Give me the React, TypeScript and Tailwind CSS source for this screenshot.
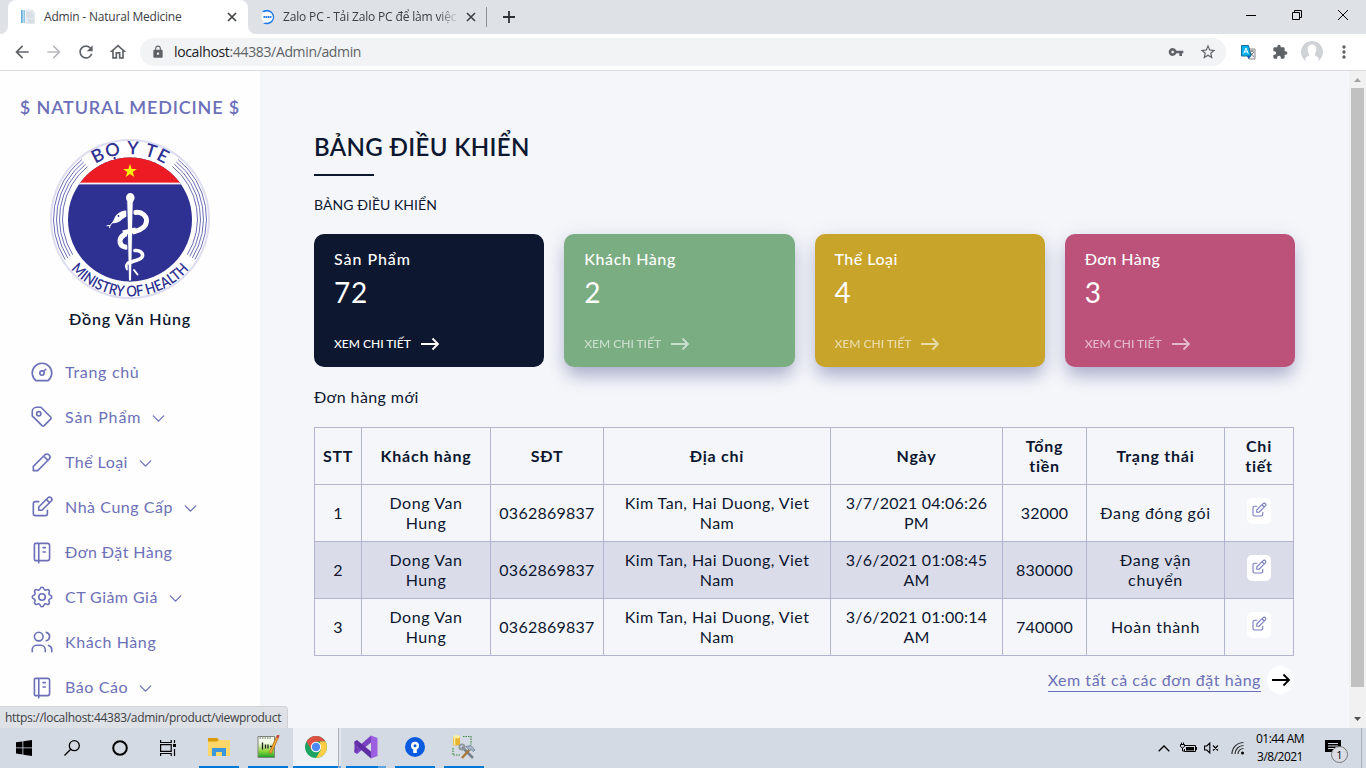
import React from "react";
import { MdArrowBack, MdArrowForward, MdRefresh, MdOutlineHome, MdLock, MdVpnKey, MdStarBorder, MdExtension, MdMoreVert } from "react-icons/md";

type IconProps = { className?: string; children: React.ReactNode };

function Line({ className = "", children }: IconProps) {
  return (
    <svg viewBox="0 0 24 24" fill="none" stroke="currentColor" strokeWidth="1.5" strokeLinecap="round" strokeLinejoin="round" className={className}>
      {children}
    </svg>
  );
}

const dashboard = (
  <>
    <circle cx="12" cy="13" r="2" />
    <path d="M13.45 11.55L15.5 9.5M6.4 20a9 9 0 1 1 11.2 0z" />
  </>
);
const tag = (
  <>
    <path d="M11 3L20 12a1.5 1.5 0 0 1 0 2L14 20a1.5 1.5 0 0 1-2 0L3 11v-4a4 4 0 0 1 4-4h4" />
    <circle cx="9" cy="9" r="2" />
  </>
);
const pencil = <path d="M4 20h4l10.5-10.5a1.5 1.5 0 0 0-4-4l-10.5 10.5v4M13.5 6.5l4 4" />;
const edit = (
  <path d="M9 7h-3a2 2 0 0 0-2 2v9a2 2 0 0 0 2 2h9a2 2 0 0 0 2-2v-3M9 15h3l8.5-8.5a1.5 1.5 0 0 0-3-3l-8.5 8.5v3M16 5l3 3" />
);
const notebook = (
  <path d="M6 4h11a2 2 0 0 1 2 2v12a2 2 0 0 1-2 2h-11a1 1 0 0 1-1-1v-14a1 1 0 0 1 1-1m3 0v18M13 8h2M13 12h2" />
);
const settings = (
  <>
    <path d="M10.325 4.317c.426-1.756 2.924-1.756 3.35 0a1.724 1.724 0 0 0 2.573 1.066c1.543-.94 3.31.826 2.37 2.37a1.724 1.724 0 0 0 1.065 2.572c1.756.426 1.756 2.924 0 3.35a1.724 1.724 0 0 0-1.066 2.573c.94 1.543-.826 3.31-2.37 2.37a1.724 1.724 0 0 0-2.572 1.065c-.426 1.756-2.924 1.756-3.35 0a1.724 1.724 0 0 0-2.573-1.066c-1.543.94-3.31-.826-2.37-2.37a1.724 1.724 0 0 0-1.065-2.572c-1.756-.426-1.756-2.924 0-3.35a1.724 1.724 0 0 0 1.066-2.573c-.94-1.543.826-3.31 2.37-2.37.996.608 2.296.07 2.572-1.065z" />
    <circle cx="12" cy="12" r="3" />
  </>
);
const users = (
  <>
    <circle cx="9" cy="7" r="4" />
    <path d="M3 21v-2a4 4 0 0 1 4-4h4a4 4 0 0 1 4 4v2M16 3.13a4 4 0 0 1 0 7.75M21 21v-2a4 4 0 0 0-3-3.85" />
  </>
);

const menu = [
  { icon: dashboard, label: "Trang chủ", arrow: false, track: "tracking-[0.7px]" },
  { icon: tag, label: "Sản Phẩm", arrow: true, track: "tracking-[0.9px]" },
  { icon: pencil, label: "Thể Loại", arrow: true, track: "tracking-[0.45px]" },
  { icon: edit, label: "Nhà Cung Cấp", arrow: true, track: "tracking-[0.55px]" },
  { icon: notebook, label: "Đơn Đặt Hàng", arrow: false, track: "tracking-[0.45px]" },
  { icon: settings, label: "CT Giảm Giá", arrow: true, track: "tracking-[0.45px]" },
  { icon: users, label: "Khách Hàng", arrow: false, track: "tracking-[0.6px]" },
  { icon: notebook, label: "Báo Cáo", arrow: true, track: "tracking-[0.6px]" },
];

function arc(r: number, side: 1 | -1) {
  const a1 = (51 * Math.PI) / 180;
  const a2 = (32 * Math.PI) / 180;
  const x = (a: number) => 80 + side * r * Math.cos(a);
  return `M${x(a1)} ${80 - r * Math.sin(a1)}A${r} ${r} 0 0 ${side === 1 ? 1 : 0} ${x(a2)} ${80 + r * Math.sin(a2)}`;
}

function Emblem() {
  return (
    <svg viewBox="0 0 160 160" className="h-40 w-40 overflow-visible">
      <defs>
        <clipPath id="disc"><circle cx="80" cy="80.5" r="62" /></clipPath>
        <path id="top" d="M15 80A65 65 0 0 1 145 80" />
        <path id="bottom" d="M2.500 80A77.500 77.500 0 0 0 157.500 80" />
      </defs>
      <circle cx="80" cy="80" r="79" fill="#fff" stroke="#dedcf0" strokeWidth="2" />
      <g fill="none" stroke="#5a5dab">
        {[67.5, 70.5, 73.5, 76.5].map((r) => (
          <React.Fragment key={r}>
            <path d={arc(r, 1)} strokeWidth="0.9" />
            <path d={arc(r, -1)} strokeWidth="0.9" />
          </React.Fragment>
        ))}
      </g>
      <g clipPath="url(#disc)">
        <rect width="160" height="160" fill="#2e3192" />
        <rect width="160" height="44" fill="#ed1c24" />
        <rect y="43.6" width="160" height="1.8" fill="#f6eef4" />
      </g>
      <path d="M80 25l1.700 5h5.200l-4.200 3.100 1.600 5-4.300-3.100-4.300 3.100 1.600-5-4.200-3.100h5.200z" fill="#fff200" />
      <g fill="none" stroke="#fff" strokeLinecap="round">
        <path d="M85.500 73.500c7-1 11.500 4 11 9-.5 6-6 8.500-12 10-8 1.500-14 3.500-14.500 9-.3 4 2 6 6 6.700" strokeWidth="5" />
        <path d="M85 111.500c5-.5 8 2.500 7.500 5.500-.7 4-7 4-11 6-4 1.500-6 3-4 6.500" strokeWidth="3.600" />
        <path d="M84 131l3.500 4.500" strokeWidth="2" />
        <path d="M63 83l-3 3.500M60 86.500l-3 .3M60 86.500l-.4 2.200" strokeWidth="1" />
      </g>
      <path d="M76.500 71.500c-5-.2-9.500 3-11.500 6.500l-3 6.300c4 .3 8-1.500 10.500-4.300l4-2.500z" fill="#fff" />
      <path d="M76.800 62h6.400L81.500 142h-3z" fill="#fff" stroke="#2e3192" strokeWidth="0.900" />
      <ellipse cx="80.300" cy="58.800" rx="4.300" ry="4.800" fill="#fff" />
      <path d="M73 94c5-1.500 9-1.800 13-3" fill="none" stroke="#fff" strokeWidth="5" />
      <path d="M77 124.500c2.500-1 4.500-1.500 7-2.300" fill="none" stroke="#fff" strokeWidth="3.400" />
      <circle cx="68.500" cy="77" r="0.900" fill="#2e3192" />
      <g fill="#2e3192" className="font-['Lato',sans-serif]" textAnchor="middle">
        <text className="text-[18px] font-semibold"><textPath href="#top" startOffset="50%" textLength="73">BỌ Y TE</textPath></text>
        <text className="text-[15px] font-semibold"><textPath href="#bottom" startOffset="50%" textLength="134" lengthAdjust="spacingAndGlyphs">MINISTRY OF HEALTH</textPath></text>
      </g>
    </svg>
  );
}

function Sidebar() {
  return (
    <aside className="flex w-[260px] shrink-0 flex-col items-center bg-[#fefefe]">
      <div className="mt-6 h-6 text-[18px] leading-6 font-semibold tracking-[0.85px] whitespace-nowrap text-[#6c70b8]">$ NATURAL MEDICINE $</div>
      <div className="mt-5"><Emblem /></div>
      <div className="mt-2 h-6 text-base leading-6 font-semibold tracking-[0.8px] text-[#0d1730]">Đồng Văn Hùng</div>
      <nav className="mt-[18px] w-full text-[#6c70b8]">
        {menu.map((m) => (
          <a key={m.label} className="flex h-[45px] items-center pl-[29px]">
            <Line className="h-[26px] w-[26px]">{m.icon}</Line>
            <span className={`ml-2.5 text-base ${m.track}`}>{m.label}</span>
            {m.arrow && (
              <Line className="mt-1 ml-[7px] h-[21px] w-[21px]"><path d="M6 9l6 6 6-6" /></Line>
            )}
          </a>
        ))}
      </nav>
    </aside>
  );
}

function Arrow({ className = "" }: { className?: string }) {
  return (
    <svg viewBox="0 0 20 14" fill="none" stroke="currentColor" strokeWidth="1.800" className={className}>
      <path d="M1 7h17M12.500 1.500L18 7l-5.500 5.500" />
    </svg>
  );
}

const cards = [
  { title: "Sản Phẩm", value: "72", look: "bg-[#0d1730]", fade: "", track: "tracking-[0.95px]" },
  { title: "Khách Hàng", value: "2", look: "bg-[#7aad81] shadow-[0_2px_20px_0_rgba(100,108,150,0.14),0_11px_17px_-3px_rgba(95,103,158,0.46)]", fade: "opacity-60", track: "tracking-[0.6px]" },
  { title: "Thể Loại", value: "4", look: "bg-[#c9a42a] shadow-[0_2px_20px_0_rgba(100,108,150,0.14),0_11px_17px_-3px_rgba(95,103,158,0.46)]", fade: "opacity-60", track: "tracking-[0.5px]" },
  { title: "Đơn Hàng", value: "3", look: "bg-[#bc5279] shadow-[0_2px_20px_0_rgba(100,108,150,0.14),0_11px_17px_-3px_rgba(95,103,158,0.46)]", fade: "opacity-60", track: "tracking-[0.4px]" },
];

const heads = ["STT", "Khách hàng", "SĐT", "Địa chỉ", "Ngày", "Tổng tiền", "Trạng thái", "Chi tiết"];
const widths = ["w-12", "w-[129px]", "w-[113px]", "w-[227px]", "w-[172px]", "w-[84px]", "w-[138px]", "w-[69px]"];
const rows = [
  ["1", "Dong Van Hung", "0362869837", "Kim Tan, Hai Duong, Viet Nam", "3/7/2021 04:06:26 PM", "32000", "Đang đóng gói"],
  ["2", "Dong Van Hung", "0362869837", "Kim Tan, Hai Duong, Viet Nam", "3/6/2021 01:08:45 AM", "830000", "Đang vận chuyển"],
  ["3", "Dong Van Hung", "0362869837", "Kim Tan, Hai Duong, Viet Nam", "3/6/2021 01:00:14 AM", "740000", "Hoàn thành"],
];
const pads = ["", "px-4", "", "px-4", "px-3", "px-2", "px-2", "px-4"];
const tracks = ["tracking-normal", "tracking-[0.6px]", "tracking-[0.25px]", "tracking-[0.42px]", "tracking-[0.2px]", "tracking-[0.2px]", "tracking-[0.65px]"];

function OrderTable() {
  return (
    <div className="w-[980px] border-t border-[#b1b5d0] text-base leading-5 text-[#0d1730]">
      <div className="flex font-bold tracking-[0.75px]">
        {heads.map((h, i) => (
          <div key={h} className={`${widths[i]} ${pads[i]} flex h-[57px] shrink-0 items-center justify-center border-r border-b border-[#b1b5d0] text-center ${i === 0 ? "border-l" : ""}`}>{h}</div>
        ))}
      </div>
      {rows.map((r, n) => (
        <div key={r[0]} className={`flex ${n === 1 ? "bg-[#dadce9]" : ""}`}>
          {r.map((c, i) => (
            <div key={i} className={`${widths[i]} ${pads[i]} ${tracks[i]} flex h-[57px] shrink-0 items-center justify-center border-r border-b border-[#b1b5d0] text-center ${i === 0 ? "border-l" : ""}`}>{c}</div>
          ))}
          <div className="flex h-[57px] w-[69px] shrink-0 justify-center border-r border-b border-[#b1b5d0] pt-[13px]">
            <span className="flex h-[26px] w-6 items-center justify-center rounded-[5px] bg-white pb-0.5 text-[#7a7ebf]">
              <Line className="h-[18px] w-[18px]">{edit}</Line>
            </span>
          </div>
        </div>
      ))}
    </div>
  );
}

function Main() {
  return (
    <main className="flex flex-1 flex-col bg-[#f4f6fa] pl-[54px] text-[#0d1730]">
      <h1 className="mt-[58px] text-2xl leading-[36px] font-semibold tracking-[0.35px]">BẢNG ĐIỀU KHIỂN</h1>
      <div className="mt-[9px] h-0.5 w-[60px] bg-[#0d1730]" />
      <p className="mt-[18px] text-sm leading-[22px] tracking-[0.05px]">BẢNG ĐIỀU KHIỂN</p>
      <div className="mt-[18px] grid w-[981px] grid-cols-4 gap-5">
        {cards.map((c) => (
          <section key={c.title} className={`flex h-[133px] flex-col rounded-[10px] px-5 text-white ${c.look}`}>
            <div className={`mt-[13px] text-base leading-6 font-medium ${c.track}`}>{c.title}</div>
            <div className="mt-1 text-[28px] leading-[34px] tracking-[0.8px]">{c.value}</div>
            <div className={`mt-6 flex items-center text-xs leading-5 font-medium ${c.fade}`}>
              <span className="pt-px">XEM CHI TIẾT</span>
              <Arrow className="ml-[9px] h-3.5 w-5" />
            </div>
          </section>
        ))}
      </div>
      <p className="mt-[18px] mb-[18px] text-base leading-6 tracking-[0.4px]">Đơn hàng mới</p>
      <OrderTable />
      <a className="mt-2.5 flex w-[980px] items-center justify-end">
        <span className="border-b border-[#6c70b8] text-base leading-[22px] tracking-[0.55px] text-[#6c70b8]">Xem tất cả các đơn đặt hàng</span>
        <span className="ml-1.5 flex h-7 w-[27px] items-center justify-center rounded-full bg-white text-black"><Arrow className="h-3.5 w-5" /></span>
      </a>
    </main>
  );
}

function Close() {
  return <svg viewBox="0 0 10 10" className="h-2.5 w-2.5 shrink-0" stroke="#3c4043" strokeWidth="1.600"><path d="M1 1l8 8M9 1L1 9" /></svg>;
}

function Browser() {
  return (
    <header className="font-['Open_Sans','Noto_Sans',sans-serif]">
      <div className="flex h-[34px] items-center bg-[#dee1e6] text-xs text-[#3c4043]">
        <div className="h-full w-2 bg-white"><div className="h-full rounded-br-lg bg-[#dee1e6]" /></div>
        <div className="flex h-full w-60 items-center rounded-t-lg bg-white pl-3">
          <svg viewBox="0 0 16 16" className="h-4 w-4"><path d="M1 1h4v13H1z" fill="#65add8" /><path d="M2.500 1h2v13h-2z" fill="#b6dcef" /><path d="M5.500.5h7l2.500 3v11.500H7l-1.500-2z" fill="#e3e9ee" /><path d="M6.500 4h5M6.500 6h7M6.500 8h7M8 11h6M8 13h6" stroke="#c5ced5" strokeWidth=".8" /></svg>
          <span className="ml-2 w-[183px] tracking-[-0.2px] whitespace-nowrap">Admin - Natural Medicine</span>
          <Close />
        </div>
        <div className="h-full w-2 bg-white"><div className="h-full rounded-bl-lg bg-[#dee1e6]" /></div>
        <svg viewBox="0 0 16 16" className="ml-1 h-4 w-4"><circle cx="7.500" cy="8" r="6" fill="#fff" /><path d="M2 2.600A7.300 7.300 0 1 1 3 14.200l3.500-.6A5.600 5.600 0 1 0 4.300 3.300z" fill="#2279f0" /><path d="M3.500 8h8" stroke="#2279f0" strokeWidth="2" strokeDasharray="1.600 .5" /></svg>
        <span className="ml-[7px] w-[176px] mask-r-from-88% tracking-[-0.16px] whitespace-nowrap">Zalo PC - Tải Zalo PC để làm việc</span>
        <span className="ml-[7px] flex"><Close /></span>
        <div className="ml-2.5 h-5 w-px bg-[#8b8f94]" />
        <svg viewBox="0 0 12 12" className="ml-4 h-3 w-3" stroke="#2f3235" strokeWidth="1.800"><path d="M6 0v12M0 6h12" /></svg>
        <div className="mr-[18px] mb-[5px] ml-auto flex items-center gap-9">
          <svg viewBox="0 0 10 10" className="h-2.5 w-2.5" stroke="#000"><path d="M0 5.500h10" /></svg>
          <svg viewBox="0 0 10 10" className="h-2.5 w-2.5" stroke="#000" fill="none"><path d="M.5 2.500h7v7h-7zM2.500 2.500v-2h7v7h-2" /></svg>
          <svg viewBox="0 0 10 10" className="h-2.5 w-2.5" stroke="#000"><path d="M0 0l10 10M10 0L0 10" /></svg>
        </div>
      </div>
      <div className="flex h-[37px] items-center border-b border-[#d9dbdf] bg-white text-[#5f6368]">
        <MdArrowBack className="ml-3 h-5 w-5" />
        <MdArrowForward className="ml-3 h-5 w-5 text-[#b8babd]" />
        <MdRefresh className="ml-3 h-5 w-5" />
        <MdOutlineHome className="ml-3 h-5 w-5" />
        <div className="ml-3 flex h-7 w-[1086px] items-center rounded-full bg-[#f1f3f4]">
          <MdLock className="ml-[11px] h-3.5 w-3.5" />
          <span className="ml-[9px] text-sm tracking-[-0.35px]"><span className="text-[#202124]">localhost</span>:44383/Admin/admin</span>
          <MdVpnKey className="ml-auto h-4 w-4" />
          <MdStarBorder className="mr-[9px] ml-[15px] h-[18px] w-[18px]" />
        </div>
        <svg viewBox="0 0 15 15" className="ml-[15px] h-[15px] w-[15px]"><path d="M6 4h8v10H8z" fill="#eef0f1" stroke="#8c8c8c" /><path d="M9 6h4M11 5v2M9 11l4-4M9 7l4 5" stroke="#6a6a6a" strokeWidth=".8" /><path d="M.5.500h7L10 11H.500z" fill="#06b1f0" stroke="#156f98" /><path d="M6 11h4l-2.500 3z" fill="#1254c0" /><path d="M2.800 8.500L5 3l2.200 5.500M3.500 6.800h3" stroke="#fff" fill="none" /></svg>
        <MdExtension className="ml-4 h-4 w-4" />
        <svg viewBox="0 0 22 22" className="ml-[13px] h-[22px] w-[22px]"><circle cx="11" cy="11" r="11" fill="#cfd3d8" /><path d="M11 3.500c-3 0-4.600 2-4.400 5 .1 2 .8 3.300 1.400 4.200v2c-1.500.8-3 1.300-3.500 2.500v3a11 11 0 0 0 13 0v-3c-.5-1.200-2-1.700-3.500-2.500v-2c.6-.9 1.300-2.200 1.400-4.200.2-3-1.400-5-4.400-5z" fill="#fff" /></svg>
        <MdMoreVert className="ml-[11px] h-5 w-5" />
      </div>
    </header>
  );
}

function Task({ children, className = "", bar = "bg-[#0078d7]" }: { children: React.ReactNode; className?: string; bar?: string }) {
  return (
    <div className={`flex h-10 w-10 shrink-0 flex-col items-center ${className}`}>
      <div className="flex h-[38px] items-center">{children}</div>
      <div className={`h-0.5 w-full ${bar}`} />
    </div>
  );
}

function Taskbar() {
  return (
    <footer className="flex h-10 shrink-0 items-center bg-[#d3dae4] font-['Open_Sans','Noto_Sans',sans-serif]">
      <svg viewBox="0 0 16 16" className="ml-4 h-4 w-4"><path d="M0 2.300l6.500-.9v6.100H0zM7.300 1.300L16 0v7.500H7.300zM0 8.300h6.500v6.200L0 13.600zM7.300 8.300H16V16l-8.700-1.200z" /></svg>
      <svg viewBox="0 0 16 16" className="ml-8 h-4 w-4" fill="none" stroke="#000" strokeWidth="1.300"><circle cx="10.300" cy="5.700" r="5" /><path d="M6.700 9.300L.5 15.500" /></svg>
      <svg viewBox="0 0 16 16" className="ml-8 h-4 w-4" fill="none" stroke="#000" strokeWidth="2"><circle cx="8" cy="8" r="6.800" /></svg>
      <svg viewBox="0 0 17 16" className="ml-8 h-4 w-[17px]" fill="none" stroke="#000" strokeWidth="1.200"><path d="M.6 4.600h10.600v6.800H.6zM.6 0v2.500h10.600V0M.6 16v-2.500h10.600V16M14.500 0v3M14.500 9v7" /><path d="M13 4h3v3h-3z" fill="#000" stroke="none" /></svg>
      <Task className="ml-[22px]">
        <svg viewBox="0 0 22 18" className="h-[18px] w-[22px]"><path d="M0 0h9l2 2H22v16H0z" fill="#ffd668" /><path d="M0 0h9l2 2-2 1.500H0z" fill="#d99a0b" /><path d="M4 18v-8h14v8h-4v-4H8v4z" fill="#3b97dd" /></svg>
      </Task>
      <Task className="ml-[9px]">
        <svg viewBox="0 0 24 24" className="h-6 w-6"><defs><linearGradient id="np" x2="0" y2="1"><stop offset=".3" stopColor="#f4faea" /><stop offset=".7" stopColor="#8dd63a" /><stop offset="1" stopColor="#13a12b" /></linearGradient></defs><path d="M2 1.500h16.500v21H2z" fill="url(#np)" stroke="#80837c" /><path d="M3.500 3h12" stroke="#8a9b94" strokeWidth="1.500" strokeDasharray="1.500 1" /><path d="M6.500 7.500v7M9.500 9.500v4M12 9.500v4M14 11.500h2" stroke="#222" strokeWidth="1.300" /><path d="M21.500 2L14 18.500" stroke="#a86b17" strokeWidth="3" /><path d="M21.500 2L14.300 18" stroke="#f0a73a" strokeWidth="1.800" /><path d="M22.500 0l-1.300 2.700" stroke="#c44" strokeWidth="2.600" /></svg>
      </Task>
      <div className="ml-[5px] flex h-10 w-[45px] flex-col items-center bg-[#eef1f5]">
        <div className="flex h-[38px] items-center pl-px">
          <svg viewBox="0 0 22 22" className="h-[22px] w-[22px]"><circle cx="11" cy="11" r="11" fill="#1da462" /><path d="M1.500 5.500A11 11 0 0 1 20.500 5.500H11L6.500 14z" fill="#dd5144" /><path d="M20.500 5.500A11 11 0 0 1 11 22l4.800-8.300L15 5.500z" fill="#ffcd46" /><circle cx="11" cy="11" r="5.200" fill="#fff" /><circle cx="11" cy="11" r="4.200" fill="#4a8af4" /></svg>
        </div>
        <div className="h-0.5 w-full bg-[#0078d7]" />
      </div>
      <div className="mr-[5px] flex h-10 w-[3px] flex-col border-l border-[#aab0b9] bg-[#e2e6ec]"><div className="mt-auto h-0.5 bg-[#5ba4e2]" /></div>
      <Task bar="bg-linear-to-r from-[#0078d7] from-80% to-[#5ba4e2] to-80%">
        <svg viewBox="0 0 24 24" className="h-6 w-6"><path d="M17 .5L23.500 3v18L17 23.500z" fill="#9b5fe0" /><path d="M17 .5v7L3 19 .5 17.500V15z" fill="#7b42c2" /><path d="M17 23.500v-7L3 5 .5 6.500V9z" fill="#5f2da4" /><path d="M.5 6.500L3.500 8v8l-3 1.500z" fill="#6a35b0" /></svg>
      </Task>
      <Task className="ml-[9px]">
        <svg viewBox="0 0 20 20" className="h-5 w-5"><circle cx="10" cy="10" r="10" fill="#0a5be0" /><circle cx="10" cy="8.700" r="4" fill="#fff" /><path d="M8.200 12h3.600v4H8.200z" fill="#fff" /><circle cx="10" cy="8.700" r="1.500" fill="#0a5be0" /></svg>
      </Task>
      <Task className="ml-[9px]">
        <svg viewBox="0 0 24 24" className="h-6 w-6"><path d="M11 1.500h8v8M1 13v7h8" fill="none" stroke="#3b8a3b" strokeWidth="1.200" strokeDasharray="1.500 1" /><path d="M1 1.500h7v9H1z" fill="#e8b532" /><ellipse cx="4.500" cy="1.800" rx="3.500" ry="1.500" fill="#fff0a0" /><path d="M2.500 3v7" stroke="#fff0a0" strokeWidth="1.500" /><path d="M10 12l11 11" stroke="#77838d" strokeWidth="2.600" /><circle cx="10" cy="12" r="2.600" fill="none" stroke="#8d989f" strokeWidth="1.800" /><path d="M18 14l-8 9" stroke="#a87838" strokeWidth="2.400" /><path d="M14 11.500l5-1 4 4.500-1.500 1.500-2.500-2-1.500 1z" fill="#a6b4c6" stroke="#69778a" strokeWidth=".7" /></svg>
      </Task>
      <div className="ml-auto flex h-full items-center text-black">
        <svg viewBox="0 0 12 7" className="h-[7px] w-3" fill="none" stroke="#000" strokeWidth="1.300"><path d="M.7 6.300L6 1l5.300 5.300" /></svg>
        <svg viewBox="0 0 17 12" className="ml-2.5 h-3 w-[17px]" fill="none" stroke="#000"><path d="M5 3.500h10.500v6H4.500V7M.5 2.500h4v2l-2 1.500-2-1.500zM1.500.5v2M3.500.5v2M2.500 6v3h2" /><path d="M6 5h8v3.500H6zM16 5h1v3h-1z" fill="#000" stroke="none" /></svg>
        <svg viewBox="0 0 15 12" className="ml-[7px] h-3 w-[15px]" fill="none" stroke="#000" strokeWidth="1.100"><path d="M.6 4h2.200l3-3v10l-3-3H.600zM9 3.500l5 5M14 3.500l-5 5" /></svg>
        <svg viewBox="0 0 14 14" className="ml-3 h-3.5 w-3.5" fill="none" stroke="#333" strokeWidth="1.200"><path d="M1 13A11.500 11.500 0 0 1 12.500 1.500M4 13a8.500 8.500 0 0 1 8.500-8.500M7 13a5.500 5.500 0 0 1 5.500-5.500" /><circle cx="11.500" cy="12" r="1.500" fill="#000" stroke="none" /></svg>
        <div className="ml-2 w-[54px] text-center text-xs leading-[18px] tracking-[-0.5px] whitespace-nowrap">01:44 AM<br />3/8/2021</div>
        <div className="relative ml-[18px] h-4 w-6">
          <svg viewBox="0 0 17 16" className="h-4 w-[17px]"><path d="M0 0h16v12h-4v4l-4-4H0z" /><path d="M3 3.500h10M3 6h10M3 8.500h7" stroke="#d3dae4" /></svg>
          <span className="absolute top-1.5 left-1.5 flex h-[17px] w-[17px] items-center justify-center rounded-full border border-[#777] bg-[#d9dde3] text-[11px] leading-none">1</span>
        </div>
        <div className="ml-3 h-full w-px bg-[#aab1bb]" />
        <div className="w-1" />
      </div>
    </footer>
  );
}

export default function App() {
  return (
    <div className="relative flex h-[768px] w-[1366px] flex-col overflow-hidden font-['Lato',sans-serif]">
      <Browser />
      <div className="flex h-[657px] overflow-hidden">
        <Sidebar />
        <Main />
        <div className="flex w-[17px] flex-col items-center bg-[#f1f1f1]">
          <svg viewBox="0 0 17 17" className="h-[17px] w-[17px]"><path d="M5 11l3.500-4 3.500 4z" fill="#a3a3a3" /></svg>
          <div className="h-[599px] w-[13px] bg-[#c1c1c1]" />
          <svg viewBox="0 0 17 17" className="mt-auto h-[17px] w-[17px]"><path d="M5 6l3.500 4 3.500-4z" fill="#505050" /></svg>
        </div>
      </div>
      <Taskbar />
      <div className="absolute top-[706px] left-0 h-[22px] w-[288px] rounded-tr border-t border-r border-[#cfd2d7] bg-[#dee1e6] pl-[5px] font-['Open_Sans','Noto_Sans',sans-serif] text-xs leading-[22px] tracking-[-0.3px] whitespace-nowrap text-[#3c4043]">https://localhost:44383/admin/product/viewproduct</div>
    </div>
  );
}
